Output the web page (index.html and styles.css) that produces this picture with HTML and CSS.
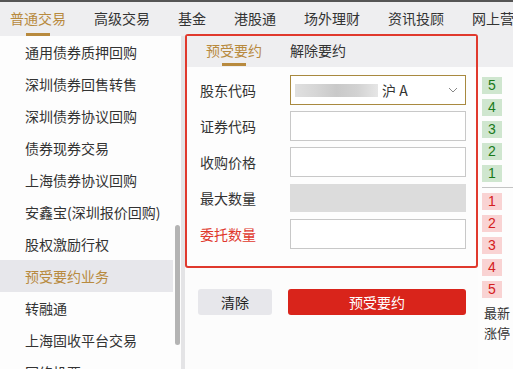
FILE: index.html
```html
<!DOCTYPE html>
<html lang="zh-CN">
    <head>
        <meta charset="utf-8">
        <title>预受要约业务</title>
        <link rel="stylesheet" href="styles.css">
    </head>
    <body>
        <div class="topnav">
            <div class="nav-item active">普通交易</div>
            <div class="nav-item">高级交易</div>
            <div class="nav-item">基金</div>
            <div class="nav-item">港股通</div>
            <div class="nav-item">场外理财</div>
            <div class="nav-item">资讯投顾</div>
            <div class="nav-item">网上营业厅</div>
        </div>

        <div class="layout">
            <div class="sidebar">
                <div class="menu-item">通用债券质押回购</div>
                <div class="menu-item">深圳债券回售转售</div>
                <div class="menu-item">深圳债券协议回购</div>
                <div class="menu-item">债券现券交易</div>
                <div class="menu-item">上海债券协议回购</div>
                <div class="menu-item">安鑫宝(深圳报价回购)</div>
                <div class="menu-item">股权激励行权</div>
                <div class="menu-item active">预受要约业务</div>
                <div class="menu-item">转融通</div>
                <div class="menu-item">上海固收平台交易</div>
                <div class="menu-item">网络投票</div>
                <div class="scrollbar"></div>
            </div>
            <div class="divider"></div>

            <div class="work">
                <div class="panel">
                    <div class="tabs">
                        <div class="tab active">预受要约</div>
                        <div class="tab">解除要约</div>
                    </div>
                    <div class="form">
                        <div class="form-row">
                            <label>股东代码</label>
                            <div class="field select">
                                <span class="masked"></span>
                                <span class="market">沪 A</span>
                                <svg class="chevron" width="10" height="6" viewBox="0 0 10 6"><path d="M1 1 L5 5 L9 1" fill="none" stroke="#888" stroke-width="1"/></svg>
                            </div>
                        </div>
                        <div class="form-row">
                            <label>证券代码</label>
                            <div class="field"></div>
                        </div>
                        <div class="form-row">
                            <label>收购价格</label>
                            <div class="field"></div>
                        </div>
                        <div class="form-row">
                            <label>最大数量</label>
                            <div class="field disabled"></div>
                        </div>
                        <div class="form-row">
                            <label class="warn">委托数量</label>
                            <div class="field"></div>
                        </div>
                    </div>
                </div>
                <div class="actions">
                    <button class="btn-clear">清除</button>
                    <button class="btn-submit">预受要约</button>
                </div>
            </div>

            <div class="quotes">
                <div class="quotes-head"></div>
                <div class="level sell">5</div>
                <div class="level sell">4</div>
                <div class="level sell">3</div>
                <div class="level sell">2</div>
                <div class="level sell">1</div>
                <div class="quotes-line"></div>
                <div class="level buy">1</div>
                <div class="level buy">2</div>
                <div class="level buy">3</div>
                <div class="level buy">4</div>
                <div class="level buy">5</div>
                <div class="quote-label">最新<br>涨停</div>
            </div>
        </div>
    </body>
</html>
```

FILE: styles.css
```css
body {
    margin: 0;
    font-family: "Noto Sans CJK SC", "Noto Sans", sans-serif;
    font-size: 14px;
    color: #333;
    background-color: #fcfcfc;
    height: 369px;
    overflow: hidden;
}

.topnav {
    display: flex;
    gap: 28px;
    height: 34px;
    padding-left: 10px;
    border-top: 2px solid #555;
    background-color: #eeeef0;
    white-space: nowrap;
    overflow: hidden;
}

.nav-item {
    position: relative;
    line-height: 33px;
    color: #333;
}

.nav-item.active {
    color: #b88a3e;
}

.nav-item.active::after {
    content: "";
    position: absolute;
    left: 50%;
    bottom: 0;
    width: 24px;
    height: 3px;
    margin-left: -12px;
    background-color: #b88a3e;
}

.layout {
    display: flex;
    height: 333px;
}

.sidebar {
    position: relative;
    width: 181px;
    flex-shrink: 0;
    background-color: #fdfdfd;
    overflow: hidden;
}

.menu-item {
    width: 148px;
    height: 32px;
    line-height: 32px;
    padding-left: 25px;
    white-space: nowrap;
}

.menu-item.active {
    background-color: #e7e7eb;
    color: #b88a3e;
}

.scrollbar {
    position: absolute;
    left: 175px;
    top: 189px;
    width: 5px;
    height: 120px;
    border-radius: 3px;
    background-color: #b4b4b4;
}

.divider {
    width: 4px;
    flex-shrink: 0;
    background-color: #e4e4e6;
}

.work {
    width: 293px;
    flex-shrink: 0;
}

.panel {
    margin-top: -2px;
    border: 2px solid #e0392d;
    border-radius: 3px;
    padding-bottom: 11px;
    background-color: #fdfdfd;
}

.tabs {
    display: flex;
    gap: 28px;
    height: 31px;
    padding-left: 19px;
    background-color: #eeeef0;
}

.tab {
    position: relative;
    line-height: 29px;
    color: #333;
}

.tab.active {
    color: #b88a3e;
}

.tab.active::after {
    content: "";
    position: absolute;
    left: 50%;
    bottom: 1px;
    width: 24px;
    height: 3px;
    margin-left: -12px;
    background-color: #b88a3e;
}

.form {
    padding: 8px 10px 0 13px;
}

.form-row {
    display: flex;
    align-items: center;
    height: 30px;
    margin-bottom: 6px;
}

.form-row label {
    width: 90px;
    color: #333;
}

.form-row label.warn {
    color: #e0392d;
}

.field {
    box-sizing: border-box;
    width: 176px;
    height: 30px;
    border: 1px solid #c8c8c8;
    background-color: #fff;
}

.field.disabled {
    height: 28px;
    border-color: #dcdcdc;
    background-color: #dcdcdc;
}

.field.select {
    display: flex;
    align-items: center;
    border-color: #a8893f;
    padding-left: 4px;
}

.masked {
    width: 83px;
    height: 13px;
    background: linear-gradient(90deg, #e0e0e0 0%, #d6d6d6 25%, #c9c9c9 50%, #d2d2d2 75%, #e6e6e6 100%);
}

.market {
    margin-left: 4px;
    color: #333;
}

.chevron {
    margin-left: auto;
    margin-right: 7px;
}

.actions {
    display: flex;
    gap: 16px;
    margin-top: 21px;
    padding-left: 13px;
}

.actions button {
    height: 26px;
    border: none;
    border-radius: 3px;
    font-family: inherit;
    font-size: 14px;
    padding: 0;
}

.btn-clear {
    width: 74px;
    background-color: #e7e7eb;
    color: #222;
}

.btn-submit {
    width: 178px;
    background-color: #d9241b;
    color: #fff;
}

.quotes {
    flex: 1;
    background-color: #fdfdfd;
}

.quotes-head {
    height: 31px;
    background-color: #eeeef0;
    margin-bottom: 10px;
}

.level {
    width: 20px;
    height: 17px;
    line-height: 17px;
    margin: 0 0 5px 4px;
    text-align: center;
    font-family: "Liberation Sans", Arial, sans-serif;
    font-size: 14px;
}

.level.sell {
    background-color: #cfe6cf;
    color: #1a7a1a;
}

.level.buy {
    background-color: #f9d3d3;
    color: #d42020;
}

.quotes-line {
    height: 1px;
    margin: 1px 0 5px 4px;
    background-color: #c4c4c4;
}

.quote-label {
    margin: 5px 0 0 6px;
    line-height: 20px;
    color: #333;
    font-size: 13px;
}
```
